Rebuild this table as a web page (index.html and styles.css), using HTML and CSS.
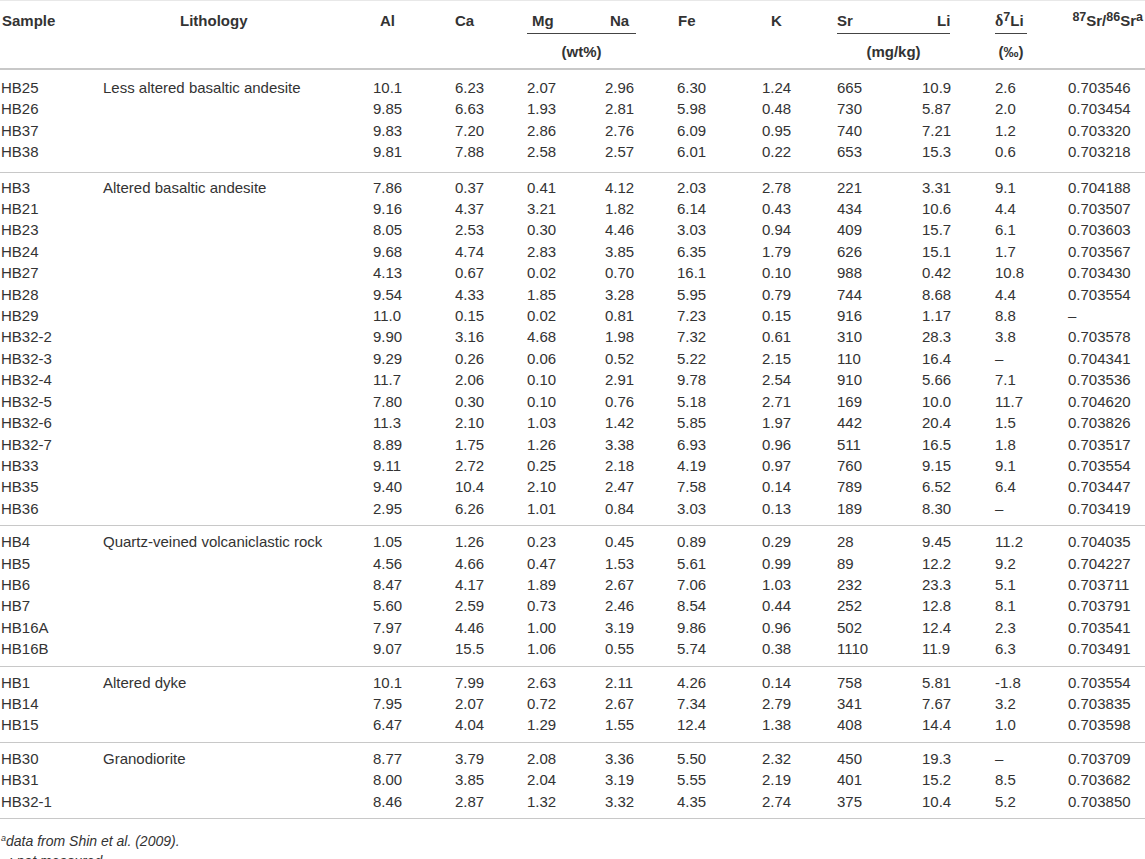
FILE: index.html
```html
<!DOCTYPE html>
<html lang="en">
<head>
<meta charset="utf-8">
<title>Table</title>
<link rel="stylesheet" href="styles.css">
</head>
<body>
<table class="data">
  <colgroup>
    <col class="c-sample"><col class="c-lith"><col class="c-al"><col class="c-ca"><col class="c-mg"><col class="c-na"><col class="c-fe"><col class="c-k"><col class="c-sr"><col class="c-li"><col class="c-d7"><col class="c-srr">
  </colgroup>
  <thead>
    <tr>
      <th rowspan="2" class="h-sample">Sample</th>
      <th rowspan="2" class="h-lith">Lithology</th>
      <th rowspan="2" class="h-al">Al</th>
      <th rowspan="2" class="h-ca">Ca</th>
      <th class="h-mg">Mg</th>
      <th class="h-na">Na</th>
      <th rowspan="2" class="h-fe">Fe</th>
      <th rowspan="2" class="h-k">K</th>
      <th class="h-sr">Sr</th>
      <th class="h-li">Li</th>
      <th class="h-d7"><span class="delta">δ</span><sup>7</sup>Li</th>
      <th rowspan="2" class="h-srr"><sup>87</sup>Sr/<sup>86</sup>Sr<sup>a</sup></th>
    </tr>
    <tr>
      <th colspan="2" class="unit-cell"><div class="unit u-wt">(wt%)</div></th>
      <th colspan="2" class="unit-cell"><div class="unit u-mg">(mg/kg)</div></th>
      <th class="unit-cell"><div class="unit u-pm">(‰)</div></th>
    </tr>
  </thead>
  <tbody class="grp first">
    <tr><td>HB25</td><td>Less altered basaltic andesite</td><td>10.1</td><td>6.23</td><td>2.07</td><td>2.96</td><td>6.30</td><td>1.24</td><td>665</td><td>10.9</td><td>2.6</td><td>0.703546</td></tr>
    <tr><td>HB26</td><td></td><td>9.85</td><td>6.63</td><td>1.93</td><td>2.81</td><td>5.98</td><td>0.48</td><td>730</td><td>5.87</td><td>2.0</td><td>0.703454</td></tr>
    <tr><td>HB37</td><td></td><td>9.83</td><td>7.20</td><td>2.86</td><td>2.76</td><td>6.09</td><td>0.95</td><td>740</td><td>7.21</td><td>1.2</td><td>0.703320</td></tr>
    <tr><td>HB38</td><td></td><td>9.81</td><td>7.88</td><td>2.58</td><td>2.57</td><td>6.01</td><td>0.22</td><td>653</td><td>15.3</td><td>0.6</td><td>0.703218</td></tr>
  </tbody>
  <tbody class="grp second">
    <tr><td>HB3</td><td>Altered basaltic andesite</td><td>7.86</td><td>0.37</td><td>0.41</td><td>4.12</td><td>2.03</td><td>2.78</td><td>221</td><td>3.31</td><td>9.1</td><td>0.704188</td></tr>
    <tr><td>HB21</td><td></td><td>9.16</td><td>4.37</td><td>3.21</td><td>1.82</td><td>6.14</td><td>0.43</td><td>434</td><td>10.6</td><td>4.4</td><td>0.703507</td></tr>
    <tr><td>HB23</td><td></td><td>8.05</td><td>2.53</td><td>0.30</td><td>4.46</td><td>3.03</td><td>0.94</td><td>409</td><td>15.7</td><td>6.1</td><td>0.703603</td></tr>
    <tr><td>HB24</td><td></td><td>9.68</td><td>4.74</td><td>2.83</td><td>3.85</td><td>6.35</td><td>1.79</td><td>626</td><td>15.1</td><td>1.7</td><td>0.703567</td></tr>
    <tr><td>HB27</td><td></td><td>4.13</td><td>0.67</td><td>0.02</td><td>0.70</td><td>16.1</td><td>0.10</td><td>988</td><td>0.42</td><td>10.8</td><td>0.703430</td></tr>
    <tr><td>HB28</td><td></td><td>9.54</td><td>4.33</td><td>1.85</td><td>3.28</td><td>5.95</td><td>0.79</td><td>744</td><td>8.68</td><td>4.4</td><td>0.703554</td></tr>
    <tr><td>HB29</td><td></td><td>11.0</td><td>0.15</td><td>0.02</td><td>0.81</td><td>7.23</td><td>0.15</td><td>916</td><td>1.17</td><td>8.8</td><td>–</td></tr>
    <tr><td>HB32-2</td><td></td><td>9.90</td><td>3.16</td><td>4.68</td><td>1.98</td><td>7.32</td><td>0.61</td><td>310</td><td>28.3</td><td>3.8</td><td>0.703578</td></tr>
    <tr><td>HB32-3</td><td></td><td>9.29</td><td>0.26</td><td>0.06</td><td>0.52</td><td>5.22</td><td>2.15</td><td>110</td><td>16.4</td><td>–</td><td>0.704341</td></tr>
    <tr><td>HB32-4</td><td></td><td>11.7</td><td>2.06</td><td>0.10</td><td>2.91</td><td>9.78</td><td>2.54</td><td>910</td><td>5.66</td><td>7.1</td><td>0.703536</td></tr>
    <tr><td>HB32-5</td><td></td><td>7.80</td><td>0.30</td><td>0.10</td><td>0.76</td><td>5.18</td><td>2.71</td><td>169</td><td>10.0</td><td>11.7</td><td>0.704620</td></tr>
    <tr><td>HB32-6</td><td></td><td>11.3</td><td>2.10</td><td>1.03</td><td>1.42</td><td>5.85</td><td>1.97</td><td>442</td><td>20.4</td><td>1.5</td><td>0.703826</td></tr>
    <tr><td>HB32-7</td><td></td><td>8.89</td><td>1.75</td><td>1.26</td><td>3.38</td><td>6.93</td><td>0.96</td><td>511</td><td>16.5</td><td>1.8</td><td>0.703517</td></tr>
    <tr><td>HB33</td><td></td><td>9.11</td><td>2.72</td><td>0.25</td><td>2.18</td><td>4.19</td><td>0.97</td><td>760</td><td>9.15</td><td>9.1</td><td>0.703554</td></tr>
    <tr><td>HB35</td><td></td><td>9.40</td><td>10.4</td><td>2.10</td><td>2.47</td><td>7.58</td><td>0.14</td><td>789</td><td>6.52</td><td>6.4</td><td>0.703447</td></tr>
    <tr><td>HB36</td><td></td><td>2.95</td><td>6.26</td><td>1.01</td><td>0.84</td><td>3.03</td><td>0.13</td><td>189</td><td>8.30</td><td>–</td><td>0.703419</td></tr>
  </tbody>
  <tbody class="grp">
    <tr><td>HB4</td><td>Quartz-veined volcaniclastic rock</td><td>1.05</td><td>1.26</td><td>0.23</td><td>0.45</td><td>0.89</td><td>0.29</td><td>28</td><td>9.45</td><td>11.2</td><td>0.704035</td></tr>
    <tr><td>HB5</td><td></td><td>4.56</td><td>4.66</td><td>0.47</td><td>1.53</td><td>5.61</td><td>0.99</td><td>89</td><td>12.2</td><td>9.2</td><td>0.704227</td></tr>
    <tr><td>HB6</td><td></td><td>8.47</td><td>4.17</td><td>1.89</td><td>2.67</td><td>7.06</td><td>1.03</td><td>232</td><td>23.3</td><td>5.1</td><td>0.703711</td></tr>
    <tr><td>HB7</td><td></td><td>5.60</td><td>2.59</td><td>0.73</td><td>2.46</td><td>8.54</td><td>0.44</td><td>252</td><td>12.8</td><td>8.1</td><td>0.703791</td></tr>
    <tr><td>HB16A</td><td></td><td>7.97</td><td>4.46</td><td>1.00</td><td>3.19</td><td>9.86</td><td>0.96</td><td>502</td><td>12.4</td><td>2.3</td><td>0.703541</td></tr>
    <tr><td>HB16B</td><td></td><td>9.07</td><td>15.5</td><td>1.06</td><td>0.55</td><td>5.74</td><td>0.38</td><td>1110</td><td>11.9</td><td>6.3</td><td>0.703491</td></tr>
  </tbody>
  <tbody class="grp">
    <tr><td>HB1</td><td>Altered dyke</td><td>10.1</td><td>7.99</td><td>2.63</td><td>2.11</td><td>4.26</td><td>0.14</td><td>758</td><td>5.81</td><td>-1.8</td><td>0.703554</td></tr>
    <tr><td>HB14</td><td></td><td>7.95</td><td>2.07</td><td>0.72</td><td>2.67</td><td>7.34</td><td>2.79</td><td>341</td><td>7.67</td><td>3.2</td><td>0.703835</td></tr>
    <tr><td>HB15</td><td></td><td>6.47</td><td>4.04</td><td>1.29</td><td>1.55</td><td>12.4</td><td>1.38</td><td>408</td><td>14.4</td><td>1.0</td><td>0.703598</td></tr>
  </tbody>
  <tbody class="grp last">
    <tr><td>HB30</td><td>Granodiorite</td><td>8.77</td><td>3.79</td><td>2.08</td><td>3.36</td><td>5.50</td><td>2.32</td><td>450</td><td>19.3</td><td>–</td><td>0.703709</td></tr>
    <tr><td>HB31</td><td></td><td>8.00</td><td>3.85</td><td>2.04</td><td>3.19</td><td>5.55</td><td>2.19</td><td>401</td><td>15.2</td><td>8.5</td><td>0.703682</td></tr>
    <tr><td>HB32-1</td><td></td><td>8.46</td><td>2.87</td><td>1.32</td><td>3.32</td><td>4.35</td><td>2.74</td><td>375</td><td>10.4</td><td>5.2</td><td>0.703850</td></tr>
  </tbody>
</table>
<div class="notes">
  <p class="note"><sup>a</sup>data from Shin et al. (2009).</p>
  <p class="note">–: not measured.</p>
</div>
</body>
</html>
```
FILE: styles.css
```css
html, body {
  margin: 0;
  padding: 0;
  background: #ffffff;
}

body {
  font-family: "Liberation Sans", Arial, Helvetica, sans-serif;
  color: #333333;
}

.data {
  width: 1145px;
  table-layout: fixed;
  border-collapse: separate;
  border-spacing: 0;
  border-top: 1px solid #e8e8e8;
}

.c-sample { width: 103px; }
.c-lith { width: 270px; }
.c-al { width: 82px; }
.c-ca { width: 72px; }
.c-mg { width: 78px; }
.c-na { width: 72px; }
.c-fe { width: 85px; }
.c-k { width: 75px; }
.c-sr { width: 85px; }
.c-li { width: 73px; }
.c-d7 { width: 73px; }
.c-srr { width: 77px; }

th {
  font-size: 15px;
  font-weight: bold;
  line-height: 21px;
  text-align: left;
  vertical-align: top;
  padding: 9px 0 2px;
  white-space: nowrap;
  color: #333333;
}

th sup {
  font-size: 12.5px;
  line-height: 0;
  vertical-align: 5px;
}

.delta {
  font-family: "Liberation Serif", "Times New Roman", serif;
  font-weight: bold;
  font-size: 16px;
}

.h-sample { padding-left: 2px; }
.h-lith { padding-left: 77px; }
.h-al { padding-left: 7px; }
.h-ca { padding-left: 0; }
.h-mg { padding-left: 5px; }
.h-na { padding-left: 5px; }
.h-fe { padding-left: 1px; }
.h-k { padding-left: 9px; }
.h-sr { padding-left: 0; }
.h-li { padding-left: 15px; }
.h-d7 { padding-left: 0; }
.h-srr {
  text-align: right;
  padding-right: 2px;
}

.unit-cell {
  padding: 0;
}

.unit {
  border-top: 1px solid #444444;
  padding: 7px 0 6px;
  text-align: center;
  line-height: 21px;
}

.u-wt { width: 109px; }
.u-mg { width: 113px; }
.u-pm { width: 32px; }

td {
  font-size: 15px;
  line-height: 21.4px;
  padding: 0;
  white-space: nowrap;
  vertical-align: top;
}

td:first-child {
  padding-left: 1px;
}

.grp tr:first-child td {
  border-top: 1px solid #c8c8c8;
  padding-top: 5px;
}

.grp.first tr:first-child td {
  border-top: 2px solid #c8c8c8;
  padding-top: 7px;
}

.grp.second tr:first-child td {
  padding-top: 4px;
}

.grp tr:last-child td {
  padding-bottom: 6px;
}

.grp.first tr:last-child td {
  padding-bottom: 9px;
}

.grp.last tr:last-child td {
  border-bottom: 1px solid #c8c8c8;
}

.notes {
  padding-top: 12px;
}

.note {
  margin: 0;
  font-size: 14px;
  font-style: italic;
  line-height: 20px;
  padding-left: 1px;
}

.note sup {
  font-size: 9px;
  line-height: 0;
  vertical-align: 5px;
}
```
